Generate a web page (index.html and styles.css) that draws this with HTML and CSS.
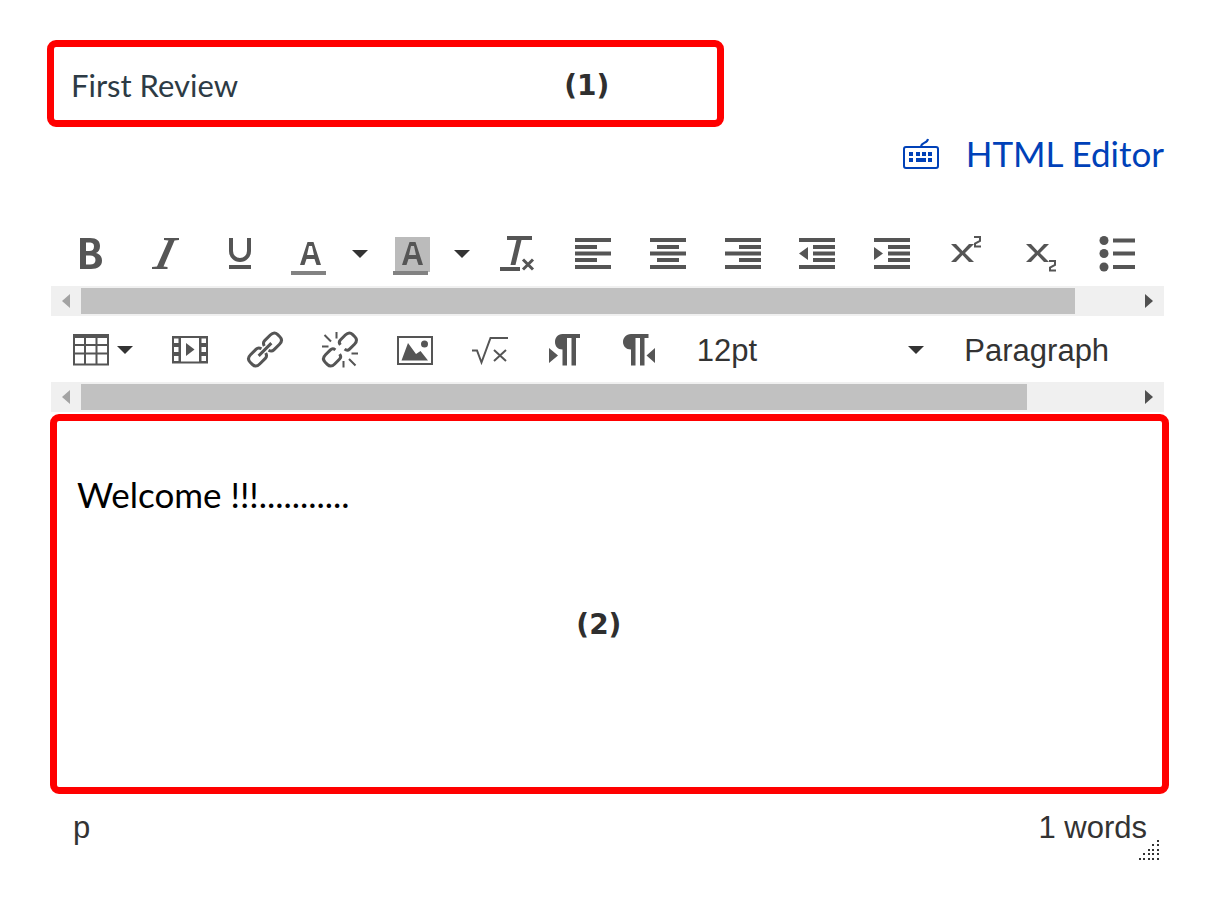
FILE: index.html
```html
<!DOCTYPE html>
<html lang="en">
  <head>
    <meta charset="UTF-8" />
    <meta name="viewport" content="width=device-width, initial-scale=1.0" />
    <title>Review Editor</title>
    <link rel="stylesheet" href="styles.css">
  </head>
  <body>
    <div class="title-box">
      <input type="text" class="title-input" value="First Review" aria-label="Title" />
      <span class="marker">(1)</span>
    </div>

    <div class="switch-row">
      <a href="#" class="switch-link">
        <svg class="keyboard" viewBox="0 0 36 32" aria-hidden="true">
          <rect x="1" y="10" width="34" height="21" rx="2" fill="none" stroke="currentColor" stroke-width="2" />
          <path d="M18 10c0-5 6-3 7-8" fill="none" stroke="currentColor" stroke-width="2" />
          <path d="M6 15h4v4h-4zM13 15h4v4h-4zM19 15h4v4h-4zM25 15h4v4h-4zM6 21h4v4h-4zM13 21h10v4h-10zM25 21h4v4h-4z" />
        </svg>
        <span>HTML Editor</span>
      </a>
    </div>

    <div class="toolbar">
      <div class="tools">
        <button class="tool" aria-label="Bold">
          <svg viewBox="0 0 36 36"><path fill-rule="evenodd" d="M8 2h10c7 0 10 3 10 8 0 3.500-1.500 6-4 7 4 1 6 4 6 7.500 0 5.500-4 8.500-11 8.500H8zM14 6.500v8.500h3c3.500 0 5-1.500 5-4.500s-1.500-4-5-4zM14 19.500v9h4c3.500 0 5.500-1.500 5.500-4.500s-2-4.500-5.500-4.500z" /></svg>
        </button>
        <button class="tool" aria-label="Italic">
          <svg viewBox="0 0 36 36"><path d="M17 2h15v2l-4.500.5L16.500 30.500l4 .5v2H5v-2l5-.5L21.500 4.500 17 4z" /></svg>
        </button>
        <button class="tool" aria-label="Underline">
          <svg viewBox="0 0 36 36"><path class="line" stroke-width="4" d="M9 2v13a9 9 0 0 0 18 0V2" /><path d="M7 29h22v4H7z" /></svg>
        </button>
        <div class="split">
          <button aria-label="Text color">
            <svg viewBox="0 0 36 36"><path fill-rule="evenodd" d="M15.500 6h6L29 29h-4.500l-2-6h-8l-2 6H8zM17 10l-2 9h7l-2-9z" /><path class="swatch" d="M-1 35h35v4H-1z" /></svg>
          </button>
          <button aria-label="Choose text color"><svg class="caret" viewBox="0 0 16 8"><path d="M0 0h16L8 8z" /></svg></button>
        </div>
        <div class="split">
          <button aria-label="Background color">
            <svg viewBox="0 0 36 36"><path class="back" d="M1 1h35v35H1z" /><path fill-rule="evenodd" d="M15.500 6h6L29 29h-4.500l-2-6h-8l-2 6H8zM17 10l-2 9h7l-2-9z" /><path class="swatch" d="M-1 35h35v4H-1z" /></svg>
          </button>
          <button aria-label="Choose background color"><svg class="caret" viewBox="0 0 16 8"><path d="M0 0h16L8 8z" /></svg></button>
        </div>
        <button class="tool" aria-label="Clear formatting">
          <svg viewBox="0 0 36 36"><path d="M7 0h25v4H21.500L15.500 29H10.500L16.500 4H7zM0 31h20v4H0z" /><path class="line" stroke-width="3" d="M23 23.500l10 10M33 23.500l-10 10" /></svg>
        </button>
        <button class="tool" aria-label="Align left">
          <svg viewBox="0 0 36 36"><path d="M0 2h36v4H0zM0 9h22v4H0zM0 15.500h36v4H0zM0 22h22v4H0zM0 29h36v4H0z" /></svg>
        </button>
        <button class="tool" aria-label="Align center">
          <svg viewBox="0 0 36 36"><path d="M0 2h36v4H0zM7 9h22v4H7zM0 15.500h36v4H0zM7 22h22v4H7zM0 29h36v4H0z" /></svg>
        </button>
        <button class="tool" aria-label="Align right">
          <svg viewBox="0 0 36 36"><path d="M0 2h36v4H0zM14 9h22v4H14zM0 15.500h36v4H0zM14 22h22v4H14zM0 29h36v4H0z" /></svg>
        </button>
        <button class="tool" aria-label="Decrease indent">
          <svg viewBox="0 0 36 36"><path d="M0 2h36v4H0zM14 9h22v4H14zM14 15.500h22v4H14zM14 22h22v4H14zM0 29h36v4H0zM9 11v13L0 17.500z" /></svg>
        </button>
        <button class="tool" aria-label="Increase indent">
          <svg viewBox="0 0 36 36"><path d="M0 2h36v4H0zM14 9h22v4H14zM14 15.500h22v4H14zM14 22h22v4H14zM0 29h36v4H0zM0 11v13l9-6.500z" /></svg>
        </button>
        <button class="tool" aria-label="Superscript">
          <svg viewBox="0 0 36 36"><path d="M2 8h5l6.500 7L20 8h5l-9 9 9 9h-5l-6.500-7L7 26H2l9-9z" /><path class="line" stroke-width="2" d="M25 1h6v4l-5 2.500v3h6" /></svg>
        </button>
        <button class="tool" aria-label="Subscript">
          <svg viewBox="0 0 36 36"><path d="M2 8h5l6.500 7L20 8h5l-9 9 9 9h-5l-6.500-7L7 26H2l9-9z" /><path class="line" stroke-width="2" d="M25 25h6v4l-5 2.500v3h6" /></svg>
        </button>
        <button class="tool" aria-label="Bullet list">
          <svg viewBox="0 0 36 36"><circle cx="5" cy="4.500" r="4.500" /><circle cx="5" cy="17.500" r="4.500" /><circle cx="5" cy="31" r="4.500" /><path d="M14 2.500h22v4H14zM14 15.500h22v4H14zM14 29h22v4H14z" /></svg>
        </button>
      </div>
      <div class="scrollbar">
        <button aria-label="Scroll left"><svg class="arrow off" viewBox="0 0 8 14"><path d="M8 0v14L0 7z" /></svg></button>
        <div class="track"><div class="thumb" style="width: 94.4%"></div></div>
        <button aria-label="Scroll right"><svg class="arrow" viewBox="0 0 8 14"><path d="M0 0v14l8-7z" /></svg></button>
      </div>
    </div>

    <div class="toolbar">
      <div class="tools full">
        <div class="split tight">
          <button aria-label="Table">
            <svg viewBox="0 0 36 36"><path fill-rule="evenodd" d="M0 2h36v31.500H0zM2 6v6h9V6zM13 6v6h9.500V6zM24.500 6v6H34V6zM2 14v6.500h9V14zM13 14v6.500h9.500V14zM24.500 14v6.500H34V14zM2 22.500v9h9v-9zM13 22.500v9h9.500v-9zM24.500 22.500v9H34v-9z" /></svg>
          </button>
          <button aria-label="Table options"><svg class="caret" viewBox="0 0 16 8"><path d="M0 0h16L8 8z" /></svg></button>
        </div>
        <button class="tool" aria-label="Insert media">
          <svg viewBox="0 0 36 36"><path fill-rule="evenodd" d="M0 4h36v27.500H0zM9 6v23.500h18V6zM2 6.500v4.500h4.500V6.500zM2 15v5h4.500v-5zM2 24v5h4.500v-5zM29.500 6.500v4.500H34V6.500zM29.500 15v5H34v-5zM29.500 24v5H34v-5z" /><path d="M14 11v13l8.500-6.500z" /></svg>
        </button>
        <button class="tool" aria-label="Insert link">
          <svg viewBox="0 0 36 36"><path class="line" stroke-width="3" transform="rotate(-45 18 17.500)" d="M16 14.500q-1-3.500-4-3.500H4q-5.500 0-5.500 5v3q0 5 5.500 5h8q3 0 4-3.500M20 14.500q1-3.500 4-3.500h8q5.500 0 5.500 5v3q0 5-5.500 5H24q-3 0-4-3.500M9 17.500h18" /></svg>
        </button>
        <button class="tool" aria-label="Remove link">
          <svg viewBox="0 0 36 36"><path class="line" stroke-width="3" transform="rotate(-45 18 17.500)" d="M14.500 14.500q-.5-3.500-3.500-3.500H4q-5.500 0-5.500 5v3q0 5 5.500 5h7q3 0 3.500-3.500M21.500 14.500q.5-3.500 3.500-3.500h7q5.500 0 5.500 5v3q0 5-5.500 5h-7q-3 0-3.500-3.500" /><path class="line" stroke-width="2" d="M2.500 3l6.500 6.500M14.500 0v6.500M0 14.500h6.500M29.500 21.500H36M21.500 29v6.500M27 27l6.500 6.500" /></svg>
        </button>
        <button class="tool" aria-label="Insert image">
          <svg viewBox="0 0 36 36"><path class="line" stroke-width="2" d="M1 5h34v27H1z" /><path d="M4.500 28.500L11 11l8 11 4.500-3L31 28.500z" /><circle cx="27.500" cy="12" r="3.500" /></svg>
        </button>
        <button class="tool" aria-label="Insert equation">
          <svg viewBox="0 0 36 36"><path class="line" stroke-width="2" d="M0 18.500h5l4.500 12L18.500 6H36M22 18l12 11M34 18l-12 11" /></svg>
        </button>
        <button class="tool" aria-label="Left to right">
          <svg viewBox="0 0 36 36"><path d="M15.500 2H33v4h-4v27.500h-4.500V6H20v27.500h-4.500V17.500c-5 0-7.500-3.500-7.500-7.500s2.500-8 7.500-8zM2 16v15l9-7.500z" /></svg>
        </button>
        <button class="tool" aria-label="Right to left">
          <svg viewBox="0 0 36 36"><path d="M10 2h17.500v4h-4v27.500H19V6h-4.500v27.500H10V17.500c-5 0-8-3.500-8-7.500s3-8 8-8zM34 16v15l-8.500-7.500z" /></svg>
        </button>
        <button class="pick size">
          <span>12pt</span>
          <svg class="caret" viewBox="0 0 16 8"><path d="M0 0h16L8 8z" /></svg>
        </button>
        <button class="pick format"><span>Paragraph</span></button>
      </div>
      <div class="scrollbar">
        <button aria-label="Scroll left"><svg class="arrow off" viewBox="0 0 8 14"><path d="M8 0v14L0 7z" /></svg></button>
        <div class="track"><div class="thumb" style="width: 89.8%"></div></div>
        <button aria-label="Scroll right"><svg class="arrow" viewBox="0 0 8 14"><path d="M0 0v14l8-7z" /></svg></button>
      </div>
    </div>

    <div class="content-box">
      <textarea class="content-input" aria-label="Content" spellcheck="false">Welcome !!!...........</textarea>
      <span class="marker over">(2)</span>
    </div>

    <div class="status">
      <span>p</span>
      <span>1 words</span>
      <svg class="grip" viewBox="0 0 22 22" aria-hidden="true">
        <path d="M19 1h2v2h-2zM14 5h2v2h-2zM19 5h2v2h-2zM10 10h2v2h-2zM14 10h2v2h-2zM19 10h2v2h-2zM5 14h2v2h-2zM10 14h2v2h-2zM14 14h2v2h-2zM19 14h2v2h-2zM1 19h2v2h-2zM5 19h2v2h-2zM10 19h2v2h-2zM14 19h2v2h-2zM19 19h2v2h-2z" />
      </svg>
    </div>
  </body>
</html>
```

FILE: styles.css
```css
* {
  box-sizing: border-box;
}
body {
  margin: 0;
  padding: 40px 50px 0 47px;
  background-color: #fff;
  color: #333;
  font-family: "Liberation Sans", Arial, sans-serif;
}
button {
  padding: 0;
  border: none;
  background: none;
  color: #333;
  font: inherit;
  cursor: pointer;
}
svg {
  display: block;
  fill: currentColor;
}
.title-box {
  display: flex;
  align-items: center;
  width: 60%;
  height: 87px;
  padding: 3px 108px 0 17px;
  border: 7px solid #f00;
  border-radius: 9px;
}
.title-input {
  flex: 1;
  min-width: 0;
  padding: 0;
  border: none;
  outline: none;
  background: none;
  color: #2d3b45;
  font-family: Lato, sans-serif;
  font-size: 31px;
}
.marker {
  color: #2f2f2f;
  font-family: "DejaVu Sans", sans-serif;
  font-size: 28px;
  font-weight: bold;
}
.switch-row {
  display: flex;
  justify-content: flex-end;
  padding: 4px 12px 0 0;
}
.switch-link {
  display: flex;
  align-items: center;
  gap: 27px;
  color: #0041b8;
  font-family: Lato, sans-serif;
  font-size: 35px;
  line-height: 44px;
  text-decoration: none;
}
.keyboard {
  width: 36px;
  height: 32px;
}
.switch-row + .toolbar {
  margin-top: 45px;
}
.toolbar {
  margin: 0 12px 0 4px;
}
.tools {
  display: flex;
  align-items: center;
  height: 66px;
  padding: 2px 10px 0 2px;
  overflow: hidden;
}
.tools.full {
  padding-right: 0;
}
.tools svg {
  width: 36px;
  height: 36px;
  overflow: visible;
}
.tool,
.split {
  display: flex;
  align-items: center;
  justify-content: center;
  color: #555;
}
.tool {
  flex: 75 0 0;
}
.split {
  flex: 98 0 0;
  gap: 24px;
  padding-left: 4px;
}
.split.tight {
  flex-grow: 100;
  gap: 8px;
  padding-left: 0;
}
.split button:first-child {
  color: #555;
}
.line {
  fill: none;
  stroke: currentColor;
}
.swatch {
  fill: #828282;
}
.back {
  fill: #bbb;
}
.tools .caret {
  width: 16px;
  height: 8px;
}
.pick {
  display: flex;
  align-items: center;
  justify-content: space-between;
  min-width: 0;
  font-size: 31px;
  line-height: 38px;
}
.pick span {
  padding: 2px 0 0 20px;
}
.pick .caret {
  margin-right: 20px;
}
.pick.size {
  flex: 268 0 0;
}
.pick.format {
  flex: 220 0 0;
}
.scrollbar {
  display: flex;
  height: 30px;
  background-color: #f0f0f0;
}
.scrollbar button {
  display: flex;
  align-items: center;
  justify-content: center;
  width: 30px;
}
.track {
  flex: 1;
  padding: 2px 0;
}
.thumb {
  height: 26px;
  background-color: #c1c1c1;
}
.arrow {
  width: 8px;
  height: 14px;
  color: #505050;
}
.arrow.off {
  color: #a3a3a3;
}
.content-box {
  position: relative;
  height: 380px;
  margin: 2px 7px 0 3px;
  border: 7px solid #f00;
  border-radius: 9px;
}
.content-input {
  display: block;
  width: 100%;
  height: 100%;
  padding: 51px 20px;
  border: none;
  outline: none;
  background: none;
  color: #000;
  font-family: Lato, sans-serif;
  font-size: 35px;
  line-height: 44px;
  resize: none;
}
.marker.over {
  position: absolute;
  top: 51%;
  left: 47%;
}
.status {
  position: relative;
  display: flex;
  justify-content: space-between;
  min-height: 67px;
  margin: 0 12px 0 4px;
  padding: 16px 17px 0 22px;
  font-size: 31px;
}
.grip {
  position: absolute;
  right: 4px;
  bottom: 0;
  width: 22px;
  height: 22px;
}
```
